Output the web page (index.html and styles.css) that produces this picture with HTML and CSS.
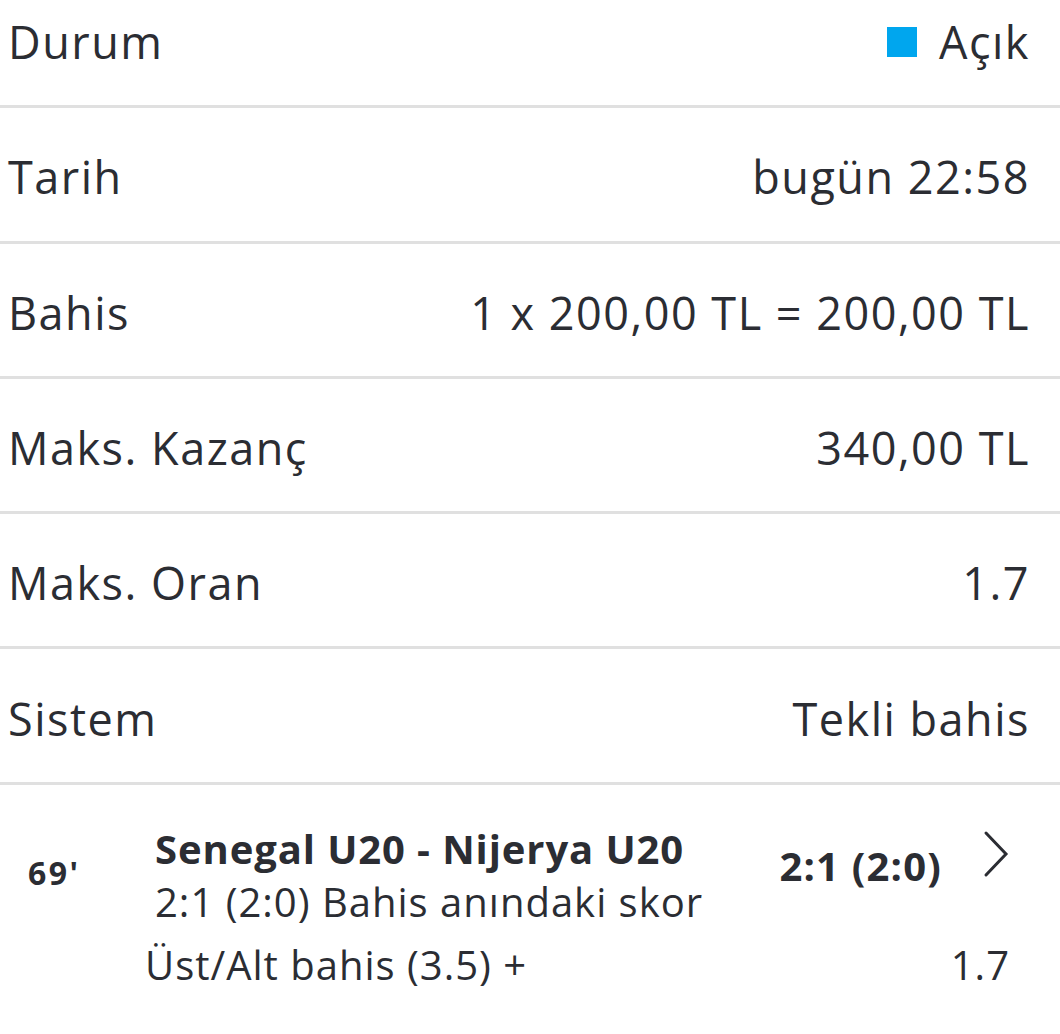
FILE: index.html
```html
<!DOCTYPE html>
<html lang="tr">
<head>
    <meta charset="UTF-8">
    <meta name="viewport" content="width=device-width, initial-scale=1.0">
    <title>Bahis Detayı</title>
    <link rel="stylesheet" href="styles.css">
</head>
<body>
    <!-- Kupon bilgileri -->
    <div class="details">
        <div class="row">
            <span class="label">Durum</span>
            <span class="value"><span class="status-dot"></span>Açık</span>
        </div>
        <div class="row">
            <span class="label">Tarih</span>
            <span class="value">bugün 22:58</span>
        </div>
        <div class="row">
            <span class="label">Bahis</span>
            <span class="value">1 x 200,00 TL = 200,00 TL</span>
        </div>
        <div class="row">
            <span class="label">Maks. Kazanç</span>
            <span class="value">340,00 TL</span>
        </div>
        <div class="row">
            <span class="label">Maks. Oran</span>
            <span class="value">1.7</span>
        </div>
        <div class="row">
            <span class="label">Sistem</span>
            <span class="value">Tekli bahis</span>
        </div>
    </div>

    <!-- Maç -->
    <div class="event">
        <div class="event-head">
            <div class="minute">69'</div>
            <div class="event-main">
                <div class="teams">Senegal U20 - Nijerya U20</div>
                <div class="live-score">2:1 (2:0) Bahis anındaki skor</div>
            </div>
            <div class="score">2:1 (2:0)</div>
            <svg class="chevron" width="28" height="48" viewBox="0 0 28 48">
                <path d="M4 3 L24 24 L4 45" fill="none" stroke="#2b2d33" stroke-width="3" stroke-linecap="round" stroke-linejoin="miter"/>
            </svg>
        </div>
        <div class="market">
            <span>Üst/Alt bahis (3.5) +</span>
            <span class="odd">1.7</span>
        </div>
    </div>
</body>
</html>
```

FILE: styles.css
```css
/* Общие стили */
body {
    margin: 0;
    padding: 0;
    font-family: 'Open Sans', 'Lato', sans-serif;
    background-color: white;
    color: #2b2d33;
    overflow: hidden;
}

/* Строки */
.details {
    margin-top: -27px;
}

.row {
    display: flex;
    justify-content: space-between;
    align-items: center;
    height: 127.3px;
    padding: 5px 30px 0 8px;
    border-bottom: 3px solid #e0e0e0;
    font-size: 45px;
    letter-spacing: 1.5px;
}

.value {
    display: flex;
    align-items: center;
}

.status-dot {
    width: 30px;
    height: 30px;
    background-color: #00a6ee;
    margin-right: 22px;
}

/* Матч */
.event {
    padding-top: 38px;
}

.event-head {
    display: flex;
    align-items: center;
}

.minute {
    width: 127px;
    padding-left: 28px;
    padding-bottom: 6px;
    font-size: 32px;
    font-weight: bold;
    letter-spacing: 2.5px;
}

.event-main {
    flex: 1;
}

.teams {
    font-size: 40px;
    font-weight: bold;
    letter-spacing: 0.9px;
    line-height: 52px;
}

.live-score {
    font-size: 40px;
    letter-spacing: 1px;
    line-height: 54px;
}

.score {
    font-size: 40px;
    font-weight: bold;
    letter-spacing: 1.2px;
    margin-right: 40px;
    margin-bottom: 20px;
}

.chevron {
    margin-right: 50px;
    margin-bottom: 44px;
}

.market {
    display: flex;
    justify-content: space-between;
    padding: 8px 50px 0 145px;
    font-size: 40px;
    letter-spacing: 1px;
}
```
